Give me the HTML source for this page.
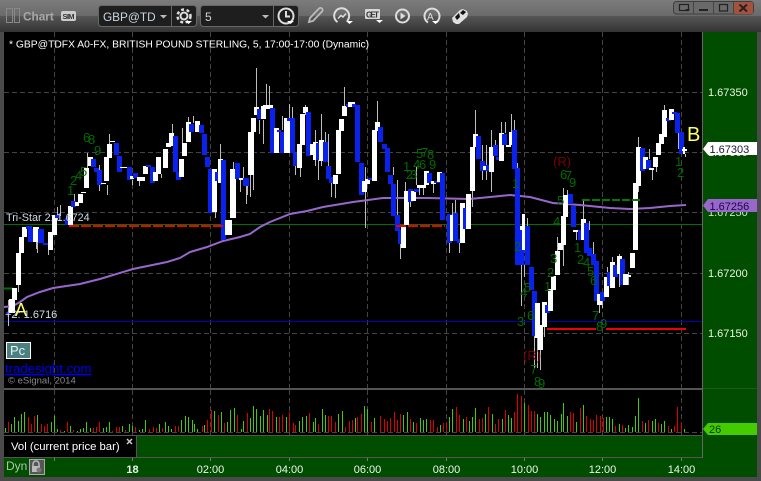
<!DOCTYPE html>
<html><head><meta charset="utf-8"><style>
html,body{margin:0;padding:0;background:#444;width:761px;height:481px;overflow:hidden}
svg{display:block}
text{font-family:"Liberation Sans",sans-serif}
.w{fill:#fff}.b{fill:#0a22ee}
.n{fill:#006b00;font-size:13px}
.ax{fill:#e8f4e0;font-size:11px}
.t{fill:#eef6ee;font-size:11px;text-anchor:middle}
.ic{fill:none;stroke:#ddd;stroke-width:2}
</style></head><body>
<svg width="761" height="481" viewBox="0 0 761 481" xmlns="http://www.w3.org/2000/svg">
<defs><linearGradient id="tb" x1="0" y1="0" x2="0" y2="1"><stop offset="0" stop-color="#7c7c7c"/><stop offset=".5" stop-color="#6a6a6a"/><stop offset=".5" stop-color="#565656"/><stop offset="1" stop-color="#333"/></linearGradient></defs>
<rect width="761" height="481" fill="#4a4a4a"/>
<rect width="761" height="32" fill="url(#tb)"/>
<!-- chart bg -->
<rect x="4" y="32" width="698" height="356" fill="#000"/>
<rect x="4" y="390" width="698" height="45" fill="#000"/>
<rect x="703" y="32" width="54" height="445" fill="#004d00"/>
<rect x="4" y="436" width="753" height="41" fill="#004d00"/>
<rect x="4" y="436" width="132" height="21" fill="#000"/>
<!-- grid -->
<g stroke="#444" stroke-width="1" stroke-dasharray="5 3" fill="none">
<path d="M4 92.5H702M4 152.5H702M4 212.5H702M4 273.5H702M4 333.5H702"/>
<path d="M54.5 32V388M132.5 32V388M210.5 32V388M289.5 32V388M367.5 32V388M446.5 32V388M524.5 32V388M602.5 32V388M681.5 32V388"/>
<path d="M54.5 390V435M132.5 390V435M210.5 390V435M289.5 390V435M367.5 390V435M446.5 390V435M524.5 390V435M602.5 390V435M681.5 390V435"/>
<path d="M4 432.5H702"/>
</g>
<path d="M4 224.5H702" stroke="#007000"/>
<path d="M4 321.5H702" stroke="#0000b8"/>
<path d="M4 288.5H13" stroke="#007000" stroke-width="2"/>
<!-- wicks -->
<path stroke="#bdbdbd" fill="none" d="M8.5 300V326M18.5 285V292M36.5 240V249M37.5 240V253M48.5 250V255M57.5 207V220M60.5 205V216M74.5 194V205M87.5 153V168M99.5 165V191M107.5 185V195M109.5 134V145M132.5 180V185M139.5 181V186M161.5 174V178M172.5 124V133M182.5 128V143M188.5 117V122M193.5 116V123M215.5 212V218M220.5 144V160M233.5 162V169M240.5 179V192M243.5 167V182M246.5 186V204M247.5 185V195M250.5 154V197M253.5 175V190M256.5 68V107M259.5 120V134M263.5 120V144M266.5 84V105M269.5 86V105M282.5 116V130M289.5 104V118M292.5 107V118M295.5 166V175M300.5 166V177M305.5 105V115M315.5 130V166M318.5 160V180M321.5 114V166M325.5 132V143M328.5 134V170M331.5 183V197M335.5 184V198M344.5 87V106M365.5 167V228M377.5 101V122M393.5 167V175M397.5 180V215M400.5 242V259M405.5 182V225M410.5 202V207M416.5 167V185M419.5 188V195M423.5 188V195M433.5 183V193M449.5 243V253M452.5 203V215M455.5 200V213M459.5 243V253M472.5 191V207M475.5 110V134M482.5 145V180M486.5 145V180M491.5 130V192M495.5 140V147M501.5 122V133M505.5 122V133M511.5 114V132M514.5 120V130M517.5 163V168M521.5 265V306M524.5 214V228M524.5 265V277M527.5 218V226M534.5 336V368M537.5 338V368M540.5 350V370M544.5 326V337M557.5 237V251M563.5 188V216M563.5 245V266M567.5 190V195M576.5 232V240M583.5 200V219M589.5 221V230M593.5 242V254M599.5 305V313M602.5 301V308M607.5 267V277M612.5 257V262M619.5 254V257M619.5 274V287M628.5 272V285M638.5 137V147M638.5 186V192M649.5 149V159M652.5 169V180M656.5 167V172M664.5 105V110M678.5 133V149M685.5 154V157"/>
<!-- purple MA -->
<polyline fill="none" stroke="#9966cc" stroke-width="2" points="4,307 13,306 20,302 27,297 40,292 53,288 80,284 100,279 133,269 167,262 180,258 190,252 207,247 223,241 240,237 250,234 260,227 270,222 290,214 307,211 323,207 353,202 383,198 407,198 427,198 470,199 490,197 510,195 530,197 553,203 580,205 610,208 630,209 650,208 670,206 686,205"/>
<!-- bodies -->
<path class="b" d="M6 312h4v2h-4z"/>
<path class="w" d="M9 299h6V313h-6zM12 288h5V300h-5zM16 253h5V285h-5zM19 237h5V253h-5zM22 227h5V237h-5z"/>
<path class="b" d="M26 226h6V229h-6zM28 229h6V242h-6z"/>
<path class="w" d="M33 227h6V242h-6z"/>
<path class="b" d="M38 229h6V243h-6zM43 243h5V245h-5z"/>
<path class="w" d="M48 232h5V250h-5zM52 215h5V235h-5z"/>
<path class="b" d="M55 215h5V218h-5zM65 218h4V225h-4z"/>
<path class="w" d="M68 206h5V225h-5z"/>
<path class="b" d="M71 201h5V207h-5z"/>
<path class="w" d="M75 202h4V206h-4zM78 194h5V203h-5zM81 192h5V193h-5zM84 168h5V188h-5zM88 157h5V166h-5z"/>
<path class="b" d="M91 159h5V167h-5zM94 168h5V172h-5zM97 170h5V185h-5z"/>
<path class="w" d="M101 183h5V184h-5zM104 157h5V181h-5zM107 144h5V158h-5zM110 141h5V142h-5z"/>
<path class="b" d="M114 143h5V155h-5zM117 156h5V172h-5z"/>
<path class="w" d="M120 167h9V168h-9z"/>
<path class="b" d="M127 167h5V180h-5z"/>
<path class="w" d="M130 176h4V179h-4z"/>
<path class="b" d="M133 173h5V178h-5z"/>
<path class="w" d="M137 177h8V181h-8zM143 166h5V174h-5z"/>
<path class="b" d="M146 165h5V167h-5zM150 167h5V183h-5z"/>
<path class="w" d="M153 172h5V181h-5zM156 157h5V174h-5zM163 149h5V168h-5zM166 143h5V147h-5zM169 133h5V146h-5z"/>
<path class="b" d="M173 136h5V172h-5zM176 172h5V180h-5z"/>
<path class="w" d="M179 159h5V177h-5zM182 143h5V156h-5zM186 122h5V142h-5z"/>
<path class="b" d="M189 124h5V132h-5z"/>
<path class="w" d="M195 121h5V132h-5z"/>
<path class="b" d="M199 125h5V133h-5zM202 134h5V155h-5zM205 157h5V167h-5zM208 169h5V213h-5z"/>
<path class="w" d="M212 169h5V212h-5z"/>
<path class="b" d="M215 172h3V181h-3z"/>
<path class="w" d="M218 159h5V183h-5z"/>
<path class="b" d="M221 160h5V240h-5z"/>
<path class="w" d="M225 220h7V235h-7zM230 169h6V218h-6z"/>
<path class="b" d="M235 163h5V179h-5z"/>
<path class="w" d="M239 178h5V180h-5z"/>
<path class="b" d="M243 178h6V186h-6z"/>
<path class="w" d="M248 132h6V175h-6zM251 118h5V132h-5zM254 107h5V115h-5z"/>
<path class="b" d="M257 109h5V119h-5z"/>
<path class="w" d="M261 106h5V119h-5zM263 105h10V109h-10z"/>
<path class="b" d="M270 108h5V153h-5z"/>
<path class="w" d="M274 128h5V153h-5z"/>
<path class="b" d="M277 130h4V132h-4zM280 132h4V153h-4z"/>
<path class="w" d="M284 118h6V153h-6z"/>
<path class="b" d="M287 118h8V121h-8zM290 118h5V153h-5zM293 153h4V166h-4z"/>
<path class="w" d="M297 144h5V168h-5zM300 114h5V145h-5zM303 107h5V113h-5z"/>
<path class="b" d="M306 112h5V156h-5z"/>
<path class="w" d="M310 144h5V155h-5zM313 142h5V160h-5z"/>
<path class="b" d="M316 143h4V160h-4z"/>
<path class="w" d="M319 140h5V161h-5z"/>
<path class="b" d="M323 142h5V162h-5zM326 166h5V179h-5zM329 177h4V183h-4z"/>
<path class="w" d="M333 175h5V184h-5zM336 130h5V174h-5zM339 119h5V131h-5zM342 106h5V116h-5z"/>
<path class="b" d="M346 104h3V107h-3z"/>
<path class="w" d="M348 102h7V107h-7z"/>
<path class="b" d="M352 104h4V107h-4zM355 105h5V162h-5zM359 163h5V195h-5z"/>
<path class="w" d="M362 181h5V192h-5zM365 179h5V184h-5z"/>
<path class="b" d="M368 178h4V180h-4z"/>
<path class="w" d="M372 130h5V181h-5zM375 122h5V131h-5z"/>
<path class="b" d="M378 127h5V142h-5zM382 144h5V149h-5zM385 148h5V172h-5zM388 175h5V184h-5zM391 184h5V216h-5zM395 215h5V231h-5zM398 230h4V244h-4z"/>
<path class="w" d="M401 226h5V248h-5zM404 191h5V225h-5z"/>
<path class="b" d="M408 189h5V202h-5z"/>
<path class="w" d="M411 191h5V201h-5z"/>
<path class="b" d="M414 189h5V192h-5z"/>
<path class="w" d="M417 185h9V188h-9zM424 171h5V185h-5z"/>
<path class="b" d="M427 173h5V183h-5z"/>
<path class="w" d="M431 181h5V184h-5z"/>
<path class="b" d="M434 181h6V183h-6z"/>
<path class="w" d="M437 172h5V182h-5z"/>
<path class="b" d="M440 173h5V220h-5zM447 214h5V243h-5z"/>
<path class="w" d="M450 215h4V241h-4z"/>
<path class="b" d="M453 213h5V241h-5zM457 239h3V243h-3z"/>
<path class="w" d="M460 203h5V243h-5z"/>
<path class="b" d="M463 208h5V229h-5z"/>
<path class="w" d="M466 194h5V229h-5zM470 147h5V191h-5zM473 134h5V147h-5z"/>
<path class="b" d="M476 136h5V159h-5zM480 161h5V171h-5zM483 165h6V171h-6z"/>
<path class="w" d="M483 166h3V170h-3zM489 147h5V172h-5z"/>
<path class="b" d="M493 145h5V156h-5zM496 157h3V160h-3z"/>
<path class="w" d="M499 133h5V161h-5z"/>
<path class="b" d="M502 134h5V145h-5z"/>
<path class="w" d="M506 145h5V147h-5zM509 132h3V145h-3z"/>
<path class="b" d="M512 130h5V169h-5zM515 168h5V265h-5z"/>
<path class="w" d="M520 226h3V240h-3z"/>
<path class="b" d="M519 230h5V265h-5z"/>
<path class="w" d="M522 214h3V250h-3z"/>
<path class="b" d="M525 226h5V265h-5zM529 267h5V290h-5zM532 291h5V336h-5z"/>
<path class="w" d="M535 303h5V338h-5zM538 325h5V350h-5zM542 302h5V327h-5z"/>
<path class="b" d="M545 305h5V313h-5z"/>
<path class="w" d="M548 289h5V311h-5zM551 276h5V290h-5zM555 251h5V275h-5zM558 243h5V250h-5zM561 216h5V245h-5zM563 195h5V217h-5z"/>
<path class="b" d="M568 194h5V204h-5zM571 206h5V227h-5z"/>
<path class="w" d="M573 230h6V232h-6z"/>
<path class="b" d="M578 230h3V240h-3z"/>
<path class="w" d="M581 219h5V240h-5z"/>
<path class="b" d="M584 223h5V253h-5zM587 248h5V256h-5zM591 254h5V265h-5zM594 261h5V301h-5z"/>
<path class="w" d="M597 294h5V305h-5z"/>
<path class="b" d="M600 292h5V301h-5z"/>
<path class="w" d="M604 277h5V297h-5z"/>
<path class="b" d="M607 272h3V286h-3z"/>
<path class="w" d="M610 262h5V288h-5z"/>
<path class="b" d="M613 265h5V277h-5z"/>
<path class="w" d="M617 256h5V274h-5z"/>
<path class="b" d="M620 259h5V285h-5z"/>
<path class="w" d="M623 274h5V285h-5zM625 275h6V277h-6zM630 253h5V268h-5zM633 183h5V250h-5zM636 147h5V186h-5z"/>
<path class="b" d="M640 148h5V171h-5z"/>
<path class="w" d="M643 157h5V169h-5z"/>
<path class="b" d="M646 160h5V169h-5z"/>
<path class="w" d="M649 168h5V170h-5zM653 157h5V167h-5zM656 143h5V155h-5zM659 134h5V144h-5zM662 110h5V137h-5z"/>
<path class="b" d="M666 118h5V121h-5z"/>
<path class="w" d="M669 109h5V120h-5z"/>
<path class="b" d="M672 112h5V114h-5zM675 113h5V133h-5zM679 132h5V154h-5z"/>
<path class="w" d="M682 149h5V151h-5zM683 147h2V154h-2z"/>
<!-- level lines -->
<path stroke="#f00000" stroke-width="2" stroke-dasharray="10 2" d="M69 226H225M396 226H445"/>
<path stroke="#f00000" stroke-width="2" d="M547 329H596M606 329H686"/>
<path stroke="#007a00" stroke-width="2" stroke-dasharray="8 2" d="M582 200H640"/>
<!-- numbers -->
<g class="n">
<text x="83" y="142">6</text><text x="88" y="144">8</text><text x="94" y="155">9</text>
<text x="67" y="195">1</text><text x="70" y="185">2</text><text x="75" y="180">4</text><text x="80" y="176">5</text>
<text x="416" y="158">5</text><text x="421" y="157">7</text><text x="427" y="159">8</text><text x="403" y="171">1</text><text x="413" y="169">4</text><text x="419" y="169">6</text><text x="429" y="169">9</text><text x="406" y="179">2</text><text x="410" y="179">3</text>
<text x="560" y="179">6</text><text x="565" y="180">7</text><text x="569" y="187">9</text><text x="557" y="205">5</text><text x="553" y="226">4</text><text x="512" y="188">1</text><text x="675" y="166">1</text><text x="677" y="177">2</text>
<text x="514" y="251">2</text><text x="550" y="263">3</text><text x="547" y="277">2</text><text x="544" y="291">1</text><text x="524" y="292">5</text><text x="520" y="297">4</text><text x="527" y="320">6</text><text x="517" y="326">3</text><text x="530" y="374">7</text><text x="534" y="386">8</text><text x="538" y="388">9</text>
<text x="574" y="252">1</text><text x="577" y="264">2</text><text x="583" y="267">4</text><text x="587" y="276">5</text><text x="590" y="285">6</text><text x="592" y="320">7</text><text x="596" y="331">8</text><text x="600" y="328">9</text>
</g>
<g fill="#7a0000" font-size="13"><text x="553" y="166">(R)</text><text x="523" y="360">(R)</text></g>
<text x="15" y="316" fill="#ffff66" font-size="18">A</text>
<text x="687" y="141" fill="#ffff66" font-size="20">B</text>
<text x="9" y="47.5" fill="#fff" font-size="10.3">* GBP@TDFX A0-FX, BRITISH POUND STERLING, 5, 17:00-17:00 (Dynamic)</text>
<text x="6" y="221" fill="#cfdde8" font-size="10.8">Tri-Star 2: 1.6724</text>
<text x="5" y="318" fill="#cfdde8" font-size="11">+2: 1.6716</text>
<rect x="6.500" y="342.500" width="24" height="16" fill="#4a8080" stroke="#fff"/>
<text x="10" y="355" fill="#e8f0f0" font-size="13">Pc</text>
<text x="5" y="373" fill="#0000f0" font-size="13.200" text-decoration="underline">tradesight.com</text>
<text x="8" y="383.500" fill="#8a8a8a" font-size="9.500">© eSignal, 2014</text>
<!-- volume -->
<path fill="none" stroke="#44cc00" d="M5.500 428V432M11.500 424V432M14.500 417V432M18.500 421V432M21.500 414V432M24.500 412V432M37.500 415V432M51.500 422V432M54.500 416V432M57.500 429V432M64.500 431V432M70.500 426V432M77.500 431V432M80.500 429V432M83.500 428V432M86.500 422V432M90.500 428V432M103.500 428V432M106.500 427V432M109.500 422V432M122.500 426V432M129.500 424V432M132.500 426V432M139.500 430V432M142.500 429V432M145.500 420V432M159.500 424V432M165.500 422V432M168.500 426V432M171.500 429V432M181.500 420V432M185.500 416V432M188.500 417V432M192.500 420V432M194.500 424V432M197.500 429V432M204.500 425V432M214.500 411V432M221.500 412V432M227.500 422V432M230.500 410V432M234.500 408V432M241.500 429V432M243.500 421V432M250.500 418V432M253.500 406V432M256.500 409V432M260.500 416V432M263.500 410V432M267.500 415V432M276.500 417V432M286.500 417V432M299.500 421V432M302.500 417V432M306.500 416V432M313.500 422V432M315.500 418V432M322.500 409V432M325.500 415V432M338.500 414V432M342.500 411V432M355.500 418V432M364.500 406V432M367.500 409V432M374.500 418V432M403.500 415V432M407.500 412V432M413.500 422V432M420.500 418V432M423.500 420V432M426.500 419V432M440.500 425V432M449.500 417V432M452.500 409V432M463.500 419V432M469.500 421V432M472.500 417V432M475.500 408V432M485.500 414V432M492.500 414V432M502.500 419V432M508.500 415V432M511.500 418V432M524.500 403V432M537.500 414V432M540.500 417V432M544.500 412V432M547.500 412V432M550.500 415V432M554.500 419V432M557.500 421V432M561.500 414V432M563.500 403V432M567.500 416V432M576.500 422V432M583.500 405V432M606.500 417V432M609.500 417V432M612.500 419V432M619.500 424V432M625.500 428V432M628.500 425V432M632.500 427V432M635.500 416V432M638.500 398V432M645.500 423V432M652.500 421V432M655.500 419V432M661.500 424V432M664.500 421V432M671.500 429V432M684.500 429V432"/>
<path fill="none" stroke="#dd0000" d="M8.500 422V432M28.500 417V432M31.500 424V432M34.500 416V432M41.500 424V432M44.500 426V432M47.500 424V432M60.500 430V432M67.500 422V432M73.500 430V432M93.500 428V432M96.500 427V432M99.500 422V432M112.500 431V432M116.500 427V432M119.500 427V432M125.500 430V432M135.500 427V432M149.500 429V432M153.500 427V432M156.500 428V432M162.500 428V432M175.500 426V432M178.500 426V432M202.500 426V432M207.500 420V432M211.500 410V432M218.500 415V432M224.500 423V432M237.500 415V432M247.500 413V432M269.500 409V432M272.500 411V432M279.500 417V432M282.500 415V432M289.500 412V432M293.500 423V432M295.500 425V432M309.500 413V432M318.500 424V432M328.500 416V432M331.500 416V432M335.500 422V432M345.500 427V432M349.500 421V432M352.500 420V432M357.500 417V432M361.500 414V432M371.500 422V432M380.500 416V432M384.500 419V432M387.500 421V432M390.500 418V432M394.500 412V432M397.500 420V432M400.500 414V432M410.500 419V432M416.500 423V432M430.500 420V432M433.500 420V432M437.500 427V432M443.500 423V432M446.500 422V432M456.500 407V432M459.500 415V432M466.500 417V432M479.500 419V432M482.500 418V432M488.500 407V432M495.500 424V432M498.500 419V432M505.500 410V432M514.500 412V432M517.500 394V432M521.500 396V432M528.500 405V432M531.500 411V432M534.500 411V432M570.500 412V432M573.500 413V432M580.500 408V432M586.500 416V432M590.500 419V432M593.500 420V432M596.500 415V432M600.500 416V432M603.500 418V432M615.500 426V432M622.500 425V432M642.500 421V432M648.500 420V432M658.500 423V432M668.500 426V432M674.500 426V432M677.500 407V432M681.500 422V432"/>
<!-- dividers -->
<rect x="4" y="388" width="698" height="2" fill="#555"/>
<rect x="703" y="388" width="54" height="1" fill="#1e5a1e"/>
<rect x="4" y="435" width="698" height="1" fill="#555"/>
<rect x="136" y="435" width="1" height="23" fill="#555"/>
<rect x="4" y="457" width="699" height="1" fill="#555"/>
<rect x="702" y="32" width="1" height="426" fill="#666"/>
<path d="M54.500 458V461M132.500 458V461M210.500 458V461M289.500 458V461M367.500 458V461M446.500 458V461M524.500 458V461M602.500 458V461M681.500 458V461" stroke="#777"/>
<!-- vol label -->
<text x="11" y="450" fill="#fff" font-size="11.300">Vol (current price bar)</text>
<path d="M127 439L132 444M132 439L127 444" stroke="#ccc" stroke-width="1.500"/>
<!-- axis -->
<g class="ax"><text x="708" y="96">1.67350</text><text x="708" y="216" opacity=".9">1.67250</text><text x="708" y="277">1.67200</text><text x="708" y="337">1.67150</text><text x="708" y="156">1.67300</text></g>
<path d="M703 149L708 142H757V155H708Z" fill="#fff"/>
<text x="709.500" y="153" fill="#1a1a30" font-size="11">1.67303</text>
<path d="M703 205.500L708 199H757V212H708Z" fill="#9966cc"/>
<text x="709.500" y="210" fill="#1a0a40" font-size="11">1.67256</text>
<path d="M703 429L708 423H757V435H708Z" fill="#44cc00"/>
<text x="709" y="433" fill="#0a3300" font-size="11">26</text>
<!-- footer -->
<text x="6" y="470" fill="#a8c8a8" font-size="12">Dyn</text>
<rect x="29.500" y="459.500" width="15" height="15" fill="#555" stroke="#aaa"/>
<path d="M33 466v-2a3 3 0 0 1 6 0v2" fill="none" stroke="#bbb" stroke-width="1.500"/><rect x="32" y="466" width="8" height="6" fill="#bbb"/><circle cx="39" cy="470" r="2.500" fill="#777"/>
<text class="t" x="132.500" y="473" font-weight="bold">18</text>
<text class="t" x="210.500" y="473">02:00</text><text class="t" x="289.500" y="473">04:00</text><text class="t" x="367.500" y="473">06:00</text><text class="t" x="446.500" y="473">08:00</text><text class="t" x="524.500" y="473">10:00</text><text class="t" x="602.500" y="473">12:00</text><text class="t" x="681.500" y="473">14:00</text>
<!-- toolbar -->
<rect x="6.500" y="8.500" width="6" height="14" fill="none" stroke="#888" stroke-width="1"/>
<rect x="14.500" y="8.500" width="5" height="14" fill="none" stroke="#888" stroke-width="1"/>
<text x="23" y="20.500" fill="#a8a8a8" font-size="11.800" font-weight="bold">Chart</text>
<rect x="61" y="11" width="15" height="10" rx="2" fill="#ccc"/>
<text x="62.500" y="19" fill="#333" font-size="7.500" font-weight="bold" textLength="12">SIM</text>
<rect x="98.500" y="5.500" width="98" height="21" rx="3" fill="#1e1e1e" stroke="#666"/>
<rect x="200.500" y="5.500" width="98" height="21" rx="3" fill="#1e1e1e" stroke="#666"/>
<path d="M171.500 6V26M273.500 6V26" stroke="#666"/>
<text x="103" y="21" fill="#c8d4e0" font-size="11.800">GBP@TD</text>
<text x="205" y="21" fill="#c8d4e0" font-size="12">5</text>
<path d="M160 15h7l-3.500 3.500zM262 15h7l-3.500 3.500z" fill="#bbb"/>
<!-- gear -->
<circle cx="184" cy="16" r="3.500" fill="none" stroke="#ddd" stroke-width="2"/>
<circle cx="184" cy="16" r="6.500" fill="none" stroke="#ddd" stroke-width="2.500" stroke-dasharray="3 2.500"/>
<path d="M185 21h7l-3.500 3z" fill="#fff"/>
<!-- clock -->
<circle cx="286" cy="16" r="7.500" class="ic"/><path d="M286 11V16.500H290" class="ic" stroke-width="1.500"/>
<path d="M287 21h7l-3.500 3z" fill="#fff"/>
<!-- pencil -->
<path d="M309 22l1-4 9-9.500a2 2 0 0 1 3 3L313 21z" fill="none" stroke="#bbb" stroke-width="1.800"/>
<!-- gauge -->
<path d="M337.500 22A7.500 7.500 0 1 1 347 21" class="ic" stroke="#ccc"/><path d="M338 18.500l3-3 2 1.500 3-3.500" fill="none" stroke="#ddd" stroke-width="1.500"/>
<path d="M346 21h7l-3.500 3z" fill="#fff"/>
<!-- GET -->
<rect x="365" y="9" width="15" height="10" rx="1" fill="#d8d8d8"/>
<text x="366" y="17.500" fill="#333" font-size="8" font-weight="bold" textLength="13">GET</text>
<path d="M376 20h7l-3.500 3z" fill="#fff"/>
<!-- play -->
<circle cx="402.500" cy="16" r="6.500" class="ic"/><path d="M400.500 12.500v7l5-3.500z" fill="#ddd"/>
<!-- A -->
<path d="M428 22.500A7.500 7.500 0 1 1 436 22.500" class="ic"/><text x="427" y="20" fill="#ddd" font-size="10">A</text>
<path d="M432 21h7l-3.500 3z" fill="#fff"/>
<!-- diamond -->
<path d="M452 18l8-8 3-1 4 2 1 3-1 3-8 7-3 0-3-2z" fill="#e0e0e0"/>
<path d="M455 17l4-4 1 4-3 3zM460 13l3-3 3 2-3 3z" fill="#111"/>
<!-- window buttons -->
<rect x="673.500" y="1.500" width="80" height="12.500" rx="3" fill="#6a6a6a" stroke="#3e3e3e"/>
<rect x="734" y="2" width="19" height="12" rx="2" fill="#a8503e"/>
<path d="M693.500 2V14M713.500 2V14M733.500 2V14" stroke="#444"/>
<rect x="679.500" y="4.500" width="9" height="6" fill="none" stroke="#222" stroke-width="1.200"/>
<path d="M685 9h5l-2.500 2.500z" fill="#222"/>
<rect x="699" y="9" width="9" height="2" fill="#222"/>
<rect x="719.500" y="4.500" width="8" height="6.500" fill="none" stroke="#222" stroke-width="1.200"/>
<path d="M739.500 4.500L747 11.500M747 4.500L739.500 11.500" stroke="#222" stroke-width="2"/>
</svg>
</body></html>
